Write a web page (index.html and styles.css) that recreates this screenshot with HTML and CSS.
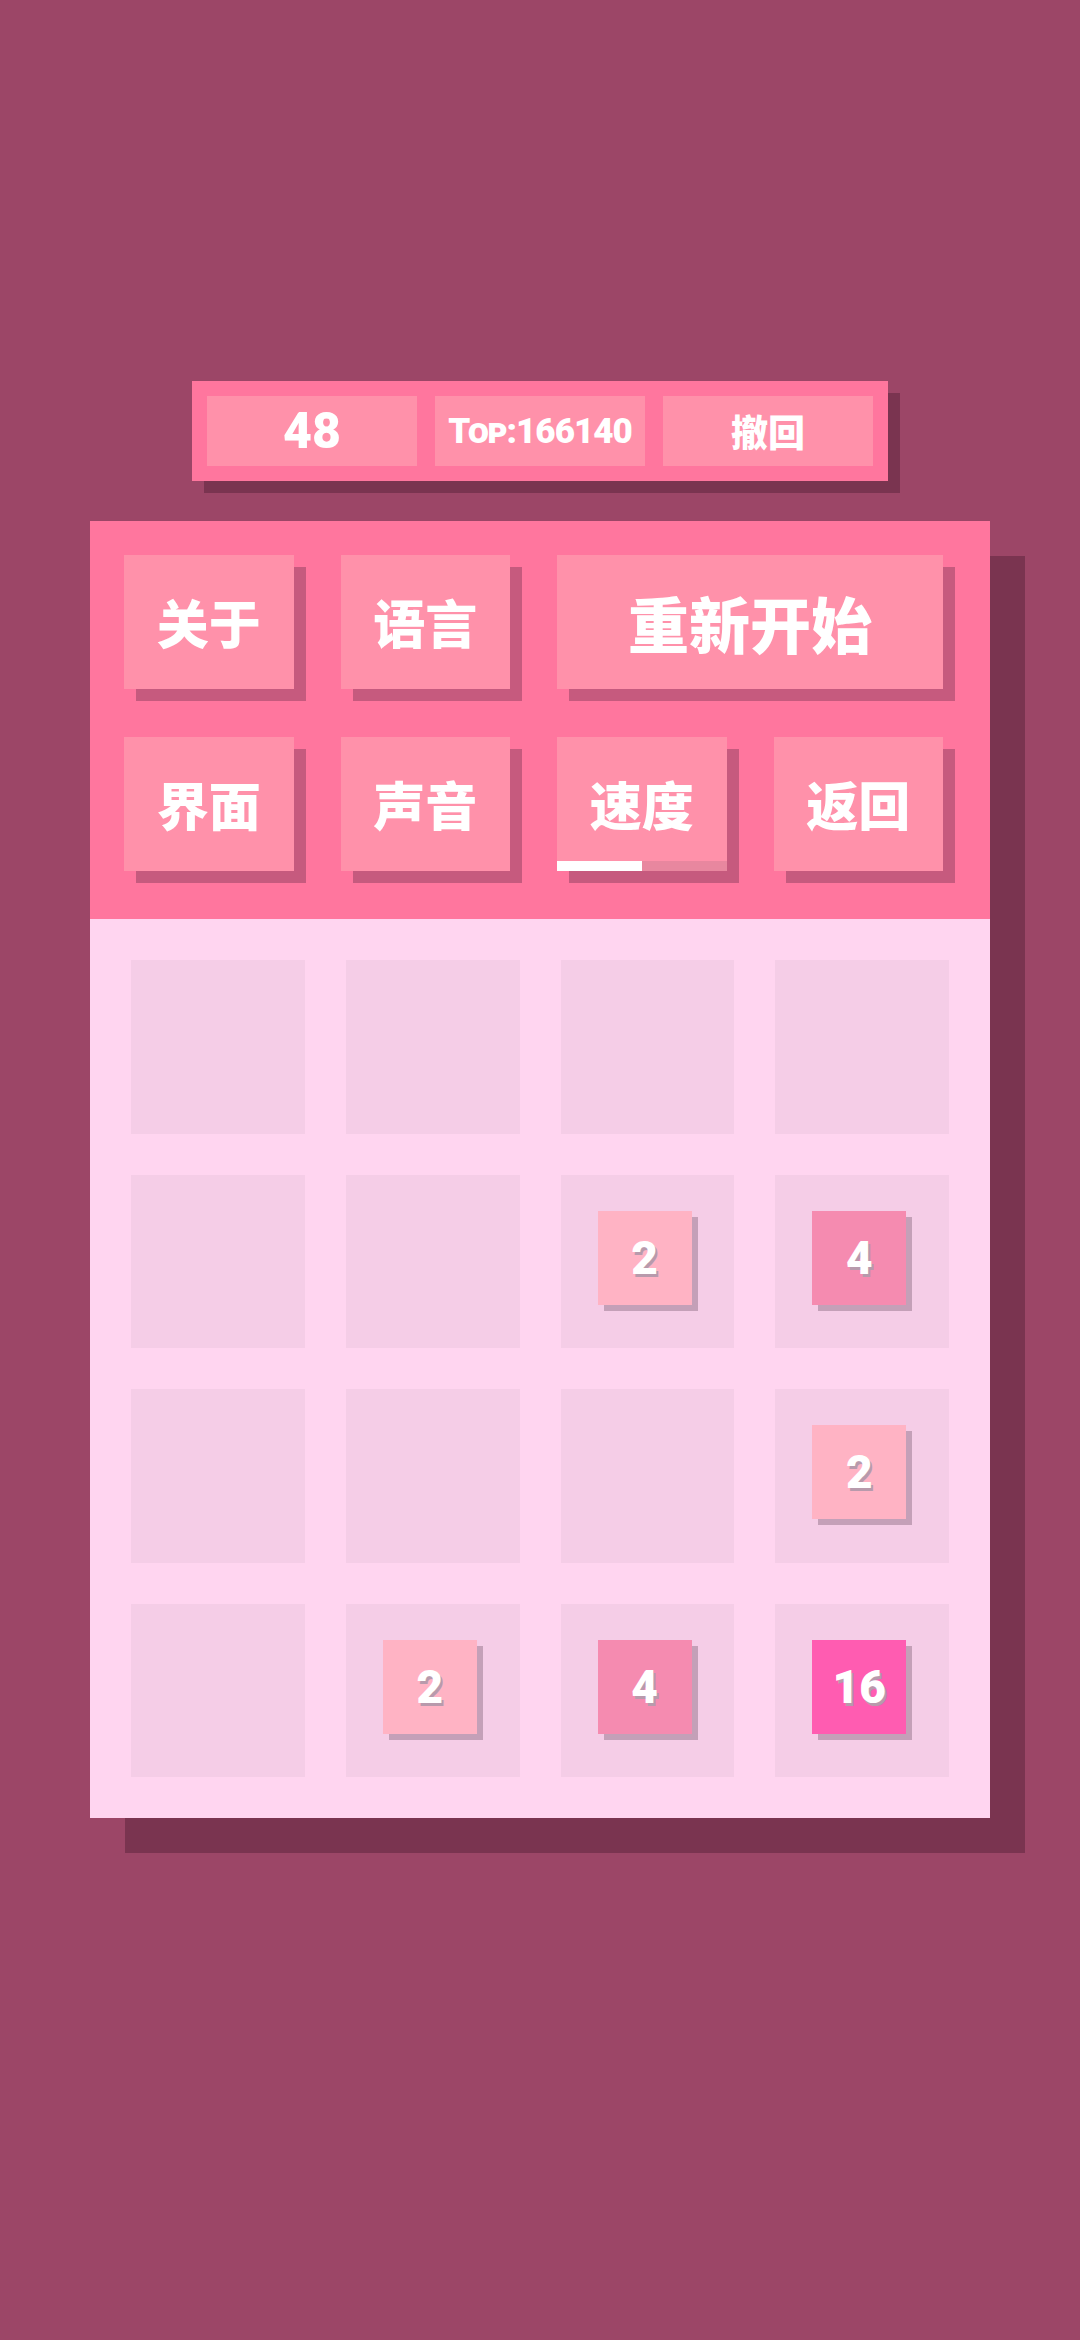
FILE: index.html
```html
<!DOCTYPE html>
<html lang="zh">
<head>
<meta charset="utf-8">
<title>2048</title>
<link rel="stylesheet" href="styles.css">
</head>
<body>
<div class="page">
  <div class="topbar">
    <div class="stat score">48</div>
    <div class="stat best">Top:166140</div>
    <div class="stat undo">撤回</div>
  </div>
  <div class="panel">
    <div class="menu">
      <div class="btn">关于</div>
      <div class="btn">语言</div>
      <div class="btn wide">重新开始</div>
      <div class="btn">界面</div>
      <div class="btn">声音</div>
      <div class="btn speed">速度<div class="progress"><div class="fill"></div></div></div>
      <div class="btn">返回</div>
    </div>
    <div class="board">
      <div class="cell"></div>
      <div class="cell"></div>
      <div class="cell"></div>
      <div class="cell"></div>
      <div class="cell"></div>
      <div class="cell"></div>
      <div class="cell"><div class="tile t2">2</div></div>
      <div class="cell"><div class="tile t4">4</div></div>
      <div class="cell"></div>
      <div class="cell"></div>
      <div class="cell"></div>
      <div class="cell"><div class="tile t2">2</div></div>
      <div class="cell"></div>
      <div class="cell"><div class="tile t2">2</div></div>
      <div class="cell"><div class="tile t4">4</div></div>
      <div class="cell"><div class="tile t16">16</div></div>
    </div>
  </div>
</div>
</body>
</html>
```

FILE: styles.css
```css
html, body {
  margin: 0;
  padding: 0;
  background: #9c4667;
}
.page {
  width: 1080px;
  height: 2340px;
  box-sizing: border-box;
  padding-top: 381px;
  font-family: "Roboto", "Noto Sans CJK SC", sans-serif;
  color: #ffffff;
}
.topbar {
  width: 696px;
  height: 100px;
  margin: 0 auto;
  box-sizing: border-box;
  padding: 15px;
  background: #ff769e;
  display: grid;
  grid-template-columns: repeat(3, 1fr);
  gap: 18px;
  box-shadow: 12px 12px 0 #7a3450;
}
.stat {
  background: #ff91aa;
  display: flex;
  align-items: center;
  justify-content: center;
  font-weight: 900;
}
.score {
  font-family: "Roboto", sans-serif;
  font-size: 50px;
}
.best {
  font-family: "Roboto", sans-serif;
  font-size: 35px;
  font-variant: small-caps;
  letter-spacing: -1px;
}
.undo {
  font-family: "Noto Sans CJK SC", sans-serif;
  font-size: 37px;
}
.panel {
  width: 900px;
  margin: 40px auto 0;
  box-shadow: 35px 35px 0 #7a3450;
}
.menu {
  background: #ff769e;
  box-sizing: border-box;
  height: 398px;
  padding: 34px 47px 48px 34px;
  display: grid;
  grid-template-columns: repeat(4, 1fr);
  grid-template-rows: 134px 134px;
  column-gap: 47px;
  row-gap: 48px;
}
.btn {
  position: relative;
  background: #ff91aa;
  box-shadow: 12px 12px 0 #c65a7e;
  display: flex;
  align-items: center;
  justify-content: center;
  font-family: "Noto Sans CJK SC", sans-serif;
  font-weight: 900;
  font-size: 52px;
  line-height: 1;
}
.btn.wide {
  grid-column: span 2;
  font-size: 61px;
}
.progress {
  position: absolute;
  left: 0;
  right: 0;
  bottom: 0;
  height: 10px;
  background: #e8879f;
}
.fill {
  width: 50%;
  height: 100%;
  background: #ffffff;
}
.board {
  background: #ffd5f0;
  box-sizing: border-box;
  height: 899px;
  padding: 41px;
  display: grid;
  grid-template-columns: repeat(4, 1fr);
  grid-template-rows: repeat(4, 1fr);
  gap: 41px;
}
.cell {
  background: #f5cde7;
  box-sizing: border-box;
  padding: 36px 0 0 37px;
}
.tile {
  width: 94px;
  height: 94px;
  display: flex;
  align-items: center;
  justify-content: center;
  font-family: "Roboto", sans-serif;
  font-weight: 900;
  font-size: 46px;
  line-height: 1;
  color: #ffffff;
  text-shadow: 2px 3px 0 #b89aac;
  box-shadow: 6px 6px 0 #c4a0b8;
}
.t2 { background: #ffb3c4; }
.t4 { background: #f58bb0; }
.t16 { background: #ff5cb1; }
```
